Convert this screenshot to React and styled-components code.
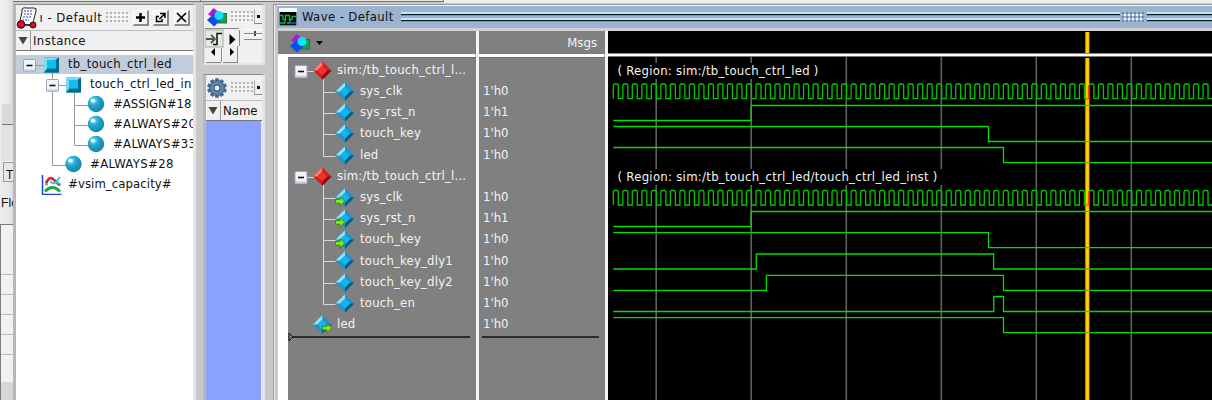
import React from "react";
import styled, { createGlobalStyle } from "styled-components";

const Global = createGlobalStyle`
  * { box-sizing: border-box; }
  body { margin: 0; background: #c9c9c9; overflow: hidden; }
  #root {
    font-family: "DejaVu Sans Condensed", "DejaVu Sans", sans-serif;
    font-size: 13px; letter-spacing: 0.1px; color: #111; white-space: nowrap;
  }
  svg { display: block; flex: none; }
`;

const Screen = styled.div`width: 1212px; height: 400px; display: flex; overflow: hidden; background: #c9c9c9;`;

/* strip of the window that lies behind */
const Behind = styled.div`
  width: 13px; height: 400px; flex: none; overflow: hidden; display: flex; flex-direction: column;
  background: linear-gradient(90deg, #ececec 0 1px, #e6e6e6 10px, #dcdcdc);
`;
const BehindTop = styled.div`height: 104px; background: linear-gradient(90deg, #efefef, #e8e8e8 9px, #d6d6d6);`;
const BehindBox = styled.div`height: 21px; margin-left: 2px; background: #d9d9d9; border-bottom: 1px solid #74747c;`;
const BehindPanel = styled.div`height: 37px; margin-left: 1px; background: #e2e2e2; border-bottom: 1px solid #f4f4f4;`;
const BehindTab = styled.div`
  height: 20px; margin-left: 3px; border: 1px solid #9a9a9a; border-right: 0;
  background: #e8e8e8; font: 12px/24px "Liberation Sans", sans-serif; padding-left: 2px;
`;
const BehindLabel = styled.div`height: 42px; font: 12px/43px "Liberation Sans", sans-serif; padding-left: 1px;`;
const BehindGrid = styled.div`
  height: 158px; border: solid #7b7b85; border-width: 1px 0 0 1px;
  background: repeating-linear-gradient(#f1f1f1 0 19px, #bdbdbd 19px 20px);
  background-position: 0 -10px;
  &::before { content: ""; display: block; height: 49px; background: #f1f1f1; }
`;
const BehindEnd = styled.div`flex: 1; background: #d6d6d6; border-left: 1px solid #7b7b85;`;

/* main columns */
const Main = styled.div`flex: 1; min-width: 0; display: flex; flex-direction: column;`;
const TopEdge = styled.div`height: 4px; flex: none; display: flex; background: #c9c9c9;`;
const TopPart = styled.div`
  width: ${p => p.$w}px; height: 2px; background: #e4e4de;
  border-right: 1px solid #777; border-bottom: 1px solid #777;
`;
const TopRest = styled.div`flex: 1; height: 3px; background: #efefef;`;
const Columns = styled.div`flex: 1; min-height: 0; display: flex;`;

const SidePanel = styled.div`
  width: ${p => p.$w}px; height: ${p => p.$h ? p.$h + "px" : "auto"}; flex: ${p => p.$h ? "none" : "1 1 auto"};
  border: solid; border-width: 1px ${p => p.$r || 3}px ${p => p.$h ? 2 : 0}px ${p => p.$l || 3}px;
  border-color: #8b8b8b #e6e6e6 #e6e6e6 #b7b7b7; background: #f0f0f0;
  box-shadow: inset 1px 0 #dcdcdc; overflow: hidden; display: flex; flex-direction: column;
`;
const InstanceCol = styled.div`width: 183px; flex: none; display: flex; flex-direction: column;`;
const ObjectsCol = styled.div`width: 62px; margin-left: 7px; flex: none; display: flex; flex-direction: column; gap: 9px;`;

const Title = styled.div`
  height: ${p => p.$h}px; flex: none; display: flex; align-items: center; overflow: hidden;
  background: #f0f0f0; padding-left: ${p => p.$pl || 0}px; letter-spacing: 0.45px;
`;
const Dots = styled.div`
  width: ${p => p.$w}px; height: 11px; margin-left: ${p => p.$ml}px; flex: none;
  background:
    radial-gradient(circle at 1px 1px, #8a8a8a 0.5px, transparent 1px) 0 0 / 4px 4px,
    radial-gradient(circle at 3px 3px, #fff 0.5px, transparent 1px) 0 0 / 4px 4px;
`;
const TitleButton = styled.div`
  width: 16px; height: 16px; margin-left: ${p => p.$ml}px; flex: none;
  display: flex; align-items: center; justify-content: center;
  background: #f3f3f3; border: solid; border-width: 1px 2px 2px 1px; border-color: #fff #8a8a8a #8a8a8a #fff;
`;
const TinyButton = styled.div`
  width: 8px; height: 15px; margin-left: auto; flex: none; padding: 5px 0 0 0;
  border: solid; border-width: 1px 0 1px 1px; border-color: #fff #888 #888 #aaa;
  &::before { content: ""; display: block; width: 3px; height: 3px; background: #111; margin-left: 2px; }
`;
const HeadRow = styled.div`
  height: ${p => p.$h}px; flex: none; display: flex; background: #f0f0f0; line-height: ${p => p.$h - 1}px;
  border-top: 1px solid #bcbcbc; border-bottom: 1px solid #777; letter-spacing: ${p => p.$ls || 0}px;
`;
const Sorter = styled.div`
  width: 15px; flex: none; margin-right: 2px; border-right: 1px solid #999; display: flex; align-items: center; justify-content: center;
`;
const Tree = styled.div`flex: 1; background: #fff; padding-top: 4px; overflow: hidden;`;
const TreeRow = styled.div`
  height: 20px; display: flex; align-items: center; overflow: hidden;
  background: ${p => p.$on ? "linear-gradient(#c1cddb 0 19px, #fff 19px)" : "transparent"};
  & > span { margin-top: -2px; letter-spacing: ${p => p.$ls || 0}px; line-height: 18px; }
`;
const BlueList = styled.div`flex: 1; background: #8aa1ff; border-right: 1px solid #dfe4ff;`;
const MiniTools = styled.div`height: 36px; display: flex; padding-left: 1px; overflow: hidden;`;

/* wave window */
const WavePanel = styled.div`
  flex: 1; min-width: 0; margin-left: 8px; display: flex; flex-direction: column; overflow: hidden;
  border-left: 1px solid #999; border-top: 1px solid #999; box-shadow: inset 1px 0 #ededed;
`;
const WaveTitle = styled.div`
  height: 23px; flex: none; display: flex; align-items: center; background: #9ab4d2; margin-left: 3px;
  border-top: 1px solid #eef6ff; padding-left: 2px; letter-spacing: 0.38px;
  & > span { margin-left: 5px; line-height: 20px; }
`;
const Ridge = styled.div`
  height: 10px; margin-left: ${p => p.$ml}px; ${p => p.$w ? `width: ${p.$w}px; flex: none;` : "flex: 1;"}
  background: linear-gradient(#bfe5f2 0 2px, #101820 2px 3px, #7d93a8 3px 4px, #9ab4d2 4px 6px, #bfe5f2 6px 8px, #101820 8px 9px, #7d93a8 9px);
`;
const Grip = styled.div`
  width: 22px; height: 10px; margin: 0 3px 0 2px; flex: none;
  background:
    radial-gradient(circle at 1px 1px, #55657a 0.5px, transparent 1px) 0 0 / 4px 4px,
    radial-gradient(circle at 3px 3px, #e9f4ff 0.8px, transparent 1.2px) 0 0 / 4px 4px;
`;
const WaveBody = styled.div`
  flex: 1; min-height: 0; display: flex; margin-left: 4px; background: #fff; border-top: 3px solid #d0d0d0;
`;
const Pane = styled.div`
  width: ${p => p.$w}px; flex: none; display: flex; flex-direction: column; color: #f4f4f4;
  border-right: ${p => p.$edge}px solid #f4f4f4; box-shadow: inset -1px 0 #b5b5b5;
`;
const PaneHead = styled.div`
  height: 23px; flex: none; background: #808080; display: flex; align-items: center; gap: 4px;
  justify-content: ${p => p.$end ? "flex-end" : "flex-start"}; padding: 0 8px 0 11px; letter-spacing: 0;
`;
const PaneBody = styled.div`
  flex: 1; margin-top: 3px; margin-left: ${p => p.$ml || 0}px; background: #808080; padding-top: 1.8px;
  border-top: 1px solid #6a6a6a; overflow: hidden;
`;
const SignalRow = styled.div`
  height: 21.2px; display: flex; align-items: center;
  & > span { margin-left: ${p => p.$gap}px; margin-top: -1px; line-height: 18px; letter-spacing: ${p => p.$ls || 0}px; }
`;
const EndRow = styled.div`display: flex; align-items: center; margin-top: -3.6px;`;
const Scope = styled.div`flex: 1; min-width: 0; display: flex; flex-direction: column; background: #000;`;
const Split = styled.div`height: 4px; flex: none; background: #fff; border-bottom: 1px solid #777; border-top: 1px solid #888;`;

const Down = () => <svg width="10" height="9"><path d="M0.5 1H9.5L5 8.5Z" fill="#444" /></svg>;

const Minus = ({ x, y }) => (
  <g>
    <rect x={x - 5.5} y={y - 5.5} width="12" height="12" rx="1" fill="#f3f4f8" stroke="#9aa5b8" />
    <path d={`M${x - 5} ${y + 5.5}h11`} stroke="#c3cbdc" strokeWidth="2" />
    <path d={`M${x - 2.5} ${y + 0.5}h6`} stroke="#111" strokeWidth="1.6" />
  </g>
);
const Cube = ({ x, y }) => (
  <g>
    <rect x={x - 8} y={y - 7} width="15" height="15" fill="#0891bd" />
    <path d={`M${x - 8} ${y - 7}h15l-4 3h-8v8l-3 4z`} fill="#6fdcf8" />
    <path d={`M${x + 7} ${y - 7}v15h-15l4-4h7v-8z`} fill="#056b8e" />
    <rect x={x - 5} y={y - 4} width="9" height="8" fill="#10bdf0" />
  </g>
);
const Ball = ({ x, y }) => (
  <g>
    <circle cx={x} cy={y} r="8.2" fill="url(#ball)" />
    <ellipse cx={x - 3} cy={y - 3.3} rx="2.4" ry="1.9" fill="#e8fcff" />
  </g>
);
const TreeArt = ({ row, w }) => {
  const line = { stroke: "#999", fill: "none" };
  return (
    <svg width={w} height="20">
      <defs>
        <radialGradient id="ball" cx="0.35" cy="0.3" r="0.75">
          <stop offset="0" stopColor="#6fe2f5" /><stop offset="0.45" stopColor="#22a3c8" /><stop offset="1" stopColor="#0f83aa" />
        </radialGradient>
      </defs>
      {row === 0 && <><path d="M18 10.5h12M36.5 16v4" {...line} /><Minus x={13} y={10} /><Cube x={36} y={9.5} /></>}
      {row === 1 && <><path d="M36.5 0v20M41 10.5h12M58.5 16v4" {...line} /><Minus x={36} y={10} /><Cube x={58} y={9.5} /></>}
      {(row === 2 || row === 3) && <><path d="M36.5 0v20M58.5 0v20M58.5 10.5h15" {...line} /><Ball x={80} y={9} /></>}
      {row === 4 && <><path d="M36.5 0v20M58.5 0v10.5h15" {...line} /><Ball x={80} y={9} /></>}
      {row === 5 && <><path d="M36.5 0v10.5h15" {...line} /><Ball x={57.5} y={9} /></>}
      {row === 6 && (
        <>
          <path d="M26.500 0v19.500h19" stroke="#1b45d8" strokeWidth="1.500" fill="none" />
          <path d="M30 8.500q3-7.500 7-4.500t5 5l2 1" stroke="#e0202c" strokeWidth="2.600" fill="none" />
          <path d="M29 9.500h3M34 6q3 4 6 1l4-5M41 7l4 3" stroke="#2fc0dc" strokeWidth="1.900" fill="none" />
          <path d="M29 16.500q7-8 15 0" stroke="#28a335" strokeWidth="2.800" fill="none" />
        </>
      )}
    </svg>
  );
};

const Gem = ({ x, y, red }) => {
  const c = red ? ["#ff7b72", "#d91c1c", "#8d0808", "#f03030"] : ["#8fe4fb", "#1b95cf", "#07597f", "#12b6ec"];
  return (
    <g transform={`translate(${x} ${y})`}>
      <path d="M0-9.3L9.3 0 0 9.3-9.3 0Z" fill={c[1]} />
      <path d="M0-9.3V-5L-5 0H-9.3Z" fill={c[0]} />
      <path d="M0 9.3V5L5 0H9.3Z" fill={c[2]} />
      <path d="M0-5L5 0 0 5-5 0Z" fill={c[3]} />
    </g>
  );
};
const Arrow = ({ x, y }) => (
  <path transform={`translate(${x} ${y})`} d="M-4.500-1.800H0V-4.600L4.800 0 0 4.800V2H-4.500Z" fill="#7fe81a" stroke="#367d08" strokeWidth="0.800" />
);
const SignalArt = ({ kind, w }) => (
  <svg width={w} height="21.2" overflow="visible">
    {kind === "group" && <><path d="M18 11.5h10M35.5 18v4" stroke="#d8d8d8" fill="none" /><Minus x={12.5} y={11} /><Gem x={34.3} y={10.5} red /></>}
    {kind !== "group" && kind !== "top" && (
      <path d={kind === "last" ? "M35.5 0v11.5h12" : "M35.5 0v22M35.5 11.5h12"} stroke="#d8d8d8" fill="none" />
    )}
    {kind === "top" && <><Gem x={34.3} y={10.5} /><Arrow x={39} y={14} /></>}
    {(kind === "in" || kind === "mid" || kind === "last") && <Gem x={57} y={10.5} />}
    {kind === "in" && <Arrow x={52} y={14.3} />}
  </svg>
);

const Shapes = () => (
  <svg width="22" height="20">
    <path d="M7.5 1L17 8.5 9 11 2 7.5Z" fill="#b816cf" />
    <rect x="12" y="6.5" width="8.5" height="9.5" fill="#16a34a" stroke="#267047" />
    <path d="M8 6.5L15 13 8 19.5 1 13Z" fill="#0d4fe6" />
    <circle cx="13" cy="8.5" r="4.5" fill="#0ce3f7" />
  </svg>
);
const Gear = () => (
  <svg width="22" height="22" viewBox="-11 -11 22 22">
    {[0, 36, 72, 108, 144].map(a => <rect key={a} x="-1.9" y="-9.8" width="3.8" height="19.6" rx="0.8" transform={`rotate(${a})`} fill="#48688f" />)}
    <circle r="7.4" fill="#5d82ab" stroke="#3d5c80" strokeWidth="1" />
    <circle r="3" fill="#e9eef4" stroke="#36526f" />
  </svg>
);
const Scroll = () => (
  <svg width="22" height="22">
    <path d="M6 2q2-2 4-1h8q3 0 2 3l-3 12q-1 3-4 2H3L6 5z" fill="#f8f8ff" stroke="#222" />
    <path d="M8 4h8M8 7h8M7 10h8M6 13h7" stroke="#3a4a9a" strokeDasharray="2 1" />
    <path d="M5 18h13" stroke="#222" strokeWidth="1.5" />
    <circle cx="5" cy="17.5" r="3.8" fill="#d0142c" stroke="#300" />
    <circle cx="17" cy="18" r="3" fill="#d0142c" stroke="#300" />
  </svg>
);
const ScopeIcon = () => (
  <svg width="18" height="18">
    <rect width="18" height="18" fill="#f5f5f5" />
    <rect x="0.5" y="4" width="17" height="13.5" fill="#020802" />
    <path d="M1 7.500h3v4h2.500v-4h4v4H13v-3h4" stroke="#08b848" fill="none" strokeWidth="1.300" />
    <path d="M1 15h5v-3.500M8 15h3v-3.500" stroke="#08b848" fill="none" strokeWidth="1.300" />
    <path d="M12 15h5" stroke="#2230d0" strokeWidth="2" />
  </svg>
);
const ToolArt = () => (
  <svg width="57" height="36">
    <path d="M0 0.500h34M16.500 20v14M34.500 2v16M32.500 18v16M1 34.500h15M18 34.500h15M39 5.500h18M39 11.500h18" stroke="#888" fill="none" />
    <path d="M39 1.500h18M39 7.500h18M17.500 20v14" stroke="#fff" />
    <path d="M50 3v2M50 6v2" stroke="#444" strokeWidth="2" />
    <rect x="0" y="2" width="18" height="17" fill="#e3ebdf" stroke="#a3aaa0" />
    <path d="M1 11h8M6 7l4 4-4 4" stroke="#555" strokeWidth="1.800" fill="none" />
    <path d="M8 16.500h4V5.500h5" stroke="#111" strokeWidth="1.500" fill="none" />
    <path d="M24.500 6l6 5.500-6 5.500zM6 24l4-4v8zM29 24l-4-4v8z" fill="#000" />
  </svg>
);

/* chart geometry, in the pane's own pixels */
const X0 = 5.3, XE = 604, PERIOD = 9.512;
const clock = (hi, lo) => {
  let d = `M${X0} ${lo}`;
  for (let x = X0; x < XE; x += PERIOD) {
    d += `V${hi + 1}L${(x + 1).toFixed(2)} ${hi}H${(x + 4).toFixed(2)}L${(x + 5).toFixed(2)} ${hi + 1}V${lo}H${(x + PERIOD).toFixed(2)}`;
  }
  return d;
};
const step = (start, edges) => `M${X0} ${start}` + edges.map(([x, y]) => `H${x}V${y}`).join("") + `H${XE}`;
const GRID = [48.2, 143.2, 238.3, 333.3, 428.3, 523.3];
const WAVES = [
  step(63.5, [[143.2, 48.5]]),
  step(69.5, [[380.5, 84.5]]),
  step(90.5, [[395.5, 105.7]]),
  step(169.5, [[143.2, 154.5]]),
  step(175.6, [[380.5, 190.6]]),
  step(212, [[148.3, 197], [385.6, 212]]),
  step(233.3, [[158.4, 218.4], [395.5, 233.4]]),
  step(254.5, [[385.8, 239.5], [395.5, 254.5]]),
  step(260.6, [[395.5, 275.6]]),
];
const CROSS = [41.9, 48.5, 84.5, 105.7, 148, 154.5, 190.6, 212, 233.4, 254.5, 275.6];

const Chart = () => (
  <svg width="604" height="343">
    {GRID.map(x => <path key={x} d={`M${x} 0V343`} stroke="#606060" strokeWidth="1.6" />)}
    <rect x="8" y="6" width="206" height="16" fill="#000" />
    <rect x="8" y="112" width="326" height="16" fill="#000" />
    <g fill="none" stroke="#00e000" strokeWidth="1.3">
      <path d={clock(27, 41.7)} stroke="#00c800" />
      <path d={clock(133.5, 148)} stroke="#00c800" />
      {WAVES.map(d => <path key={d} d={d} />)}
    </g>
    <path d="M479.300 1V343" stroke="#806a00" strokeWidth="4.800" />
    <path d="M479.300 1V343" stroke="#ffd000" strokeWidth="3.200" />
    {CROSS.map(y => <path key={y} d={`M477.800 ${y}h3`} stroke="#ff5a00" strokeWidth="1.300" />)}
    <path d="M480.500 28V42M480.500 134V148" stroke="#ff3b00" strokeWidth="1.200" />
    <g fill="#f4f4f4">
      <text x="9.500" y="18" textLength="201">( Region: sim:/tb_touch_ctrl_led )</text>
      <text x="9.500" y="124" textLength="320">( Region: sim:/tb_touch_ctrl_led/touch_ctrl_led_inst )</text>
    </g>
  </svg>
);

const INSTANCES = [
  ["tb_touch_ctrl_led", 52, 0.26], ["touch_ctrl_led_in", 74, 0.2], ["#ASSIGN#18", 97, -0.02], ["#ALWAYS#20", 97, 0.3],
  ["#ALWAYS#33", 97, 0.3], ["#ALWAYS#28", 74, 0.35], ["#vsim_capacity#", 52, 0.08],
];
const SIGNALS = [
  ["sim:/tb_touch_ctrl_l...", "group", ""], ["sys_clk", "mid", "1'h0"], ["sys_rst_n", "mid", "1'h1"],
  ["touch_key", "mid", "1'h0"], ["led", "last", "1'h0"], ["sim:/tb_touch_ctrl_l...", "group", ""],
  ["sys_clk", "in", "1'h0"], ["sys_rst_n", "in", "1'h1"], ["touch_key", "in", "1'h0"],
  ["touch_key_dly1", "mid", "1'h0"], ["touch_key_dly2", "mid", "1'h0"], ["touch_en", "last", "1'h0"], ["led", "top", "1'h0"],
];

export default function App() {
  return (
    <Screen>
      <Global />
      <Behind>
        <BehindTop /><BehindBox /><BehindPanel />
        <BehindTab>T</BehindTab>
        <BehindLabel>Flo</BehindLabel>
        <BehindGrid /><BehindEnd />
      </Behind>
      <Main>
        <TopEdge><TopPart $w={188} /><TopPart $w={243} /><TopRest /></TopEdge>
        <Columns>
          <InstanceCol>
            <SidePanel $w={183} $l={3}>
              <Title $h={25}>
                <Scroll />
                <span>&#8202;ı - Default</span>
                <Dots $w={23} $ml={4} />
                <TitleButton $ml={4}><svg width="11" height="11"><path d="M5.500 1v9M1 5.500h9" stroke="#000" strokeWidth="2.400" /></svg></TitleButton>
                <TitleButton $ml={4}><svg width="11" height="11"><path d="M5 1.500H10V6M10 1.500L4.500 7M4 4.500H1.500V9.500H7V7" stroke="#000" strokeWidth="1.500" fill="none" /></svg></TitleButton>
                <TitleButton $ml={5}><svg width="11" height="11"><path d="M1 1l9 9M10 1l-9 9" stroke="#000" strokeWidth="1.600" /></svg></TitleButton>
              </Title>
              <HeadRow $h={21} $ls={0.4}><Sorter><Down /></Sorter>Instance</HeadRow>
              <Tree>
                {INSTANCES.map(([name, w, ls], i) => (
                  <TreeRow key={name} $on={i === 0} $ls={ls}><TreeArt row={i} w={w} /><span>{name}</span></TreeRow>
                ))}
              </Tree>
            </SidePanel>
          </InstanceCol>
          <ObjectsCol>
            <SidePanel $w={62} $h={61} $l={1}>
              <Title $h={23} $pl={2}><Shapes /><Dots $w={22} $ml={3} /><TinyButton /></Title>
              <MiniTools><ToolArt /></MiniTools>
            </SidePanel>
            <SidePanel $w={62}>
              <Title $h={25}><Gear /><Dots $w={22} $ml={3} /><TinyButton /></Title>
              <HeadRow $h={21}><Sorter><Down /></Sorter>Name</HeadRow>
              <BlueList />
            </SidePanel>
          </ObjectsCol>
          <WavePanel>
            <WaveTitle>
              <ScopeIcon />
              <span>Wave - Default</span>
              <Ridge $ml={7} $w={719} />
              <Grip />
              <Ridge $ml={0} />
            </WaveTitle>
            <WaveBody>
              <Pane $w={201} $edge={3}>
                <PaneHead><Shapes /><svg width="8" height="6"><path d="M1 1h7L4.500 5z" fill="#000" /></svg></PaneHead>
                <PaneBody $ml={10}>
                  {SIGNALS.map(([name, kind], i) => (
                    <SignalRow key={i} $ls={0.2} $gap={0}>
                      <SignalArt kind={kind} w={kind === "group" || kind === "top" ? 49 : 72} /><span>{name}</span>
                    </SignalRow>
                  ))}
                  <EndRow>
                    <svg width="5" height="10"><path d="M1 1v8l4-4z" fill="#808080" stroke="#111" /></svg>
                    <svg width="177" height="10"><path d="M0 5h177" stroke="#111" strokeWidth="1.300" /></svg>
                  </EndRow>
                </PaneBody>
              </Pane>
              <Pane $w={129} $edge={3}>
                <PaneHead $end>Msgs</PaneHead>
                <PaneBody>
                  {SIGNALS.map(([, , value], i) => <SignalRow key={i} $gap={4}><span>{value}</span></SignalRow>)}
                  <EndRow><svg width="122" height="10"><path d="M3 5h117" stroke="#111" strokeWidth="1.300" /></svg></EndRow>
                </PaneBody>
              </Pane>
              <Scope>
                <svg width="604" height="22"><path d="M479.300 1V22" stroke="#806a00" strokeWidth="4.800" /><path d="M479.300 1V22" stroke="#ffd000" strokeWidth="3.200" /></svg>
                <Split />
                <Chart />
              </Scope>
            </WaveBody>
          </WavePanel>
        </Columns>
      </Main>
    </Screen>
  );
}
